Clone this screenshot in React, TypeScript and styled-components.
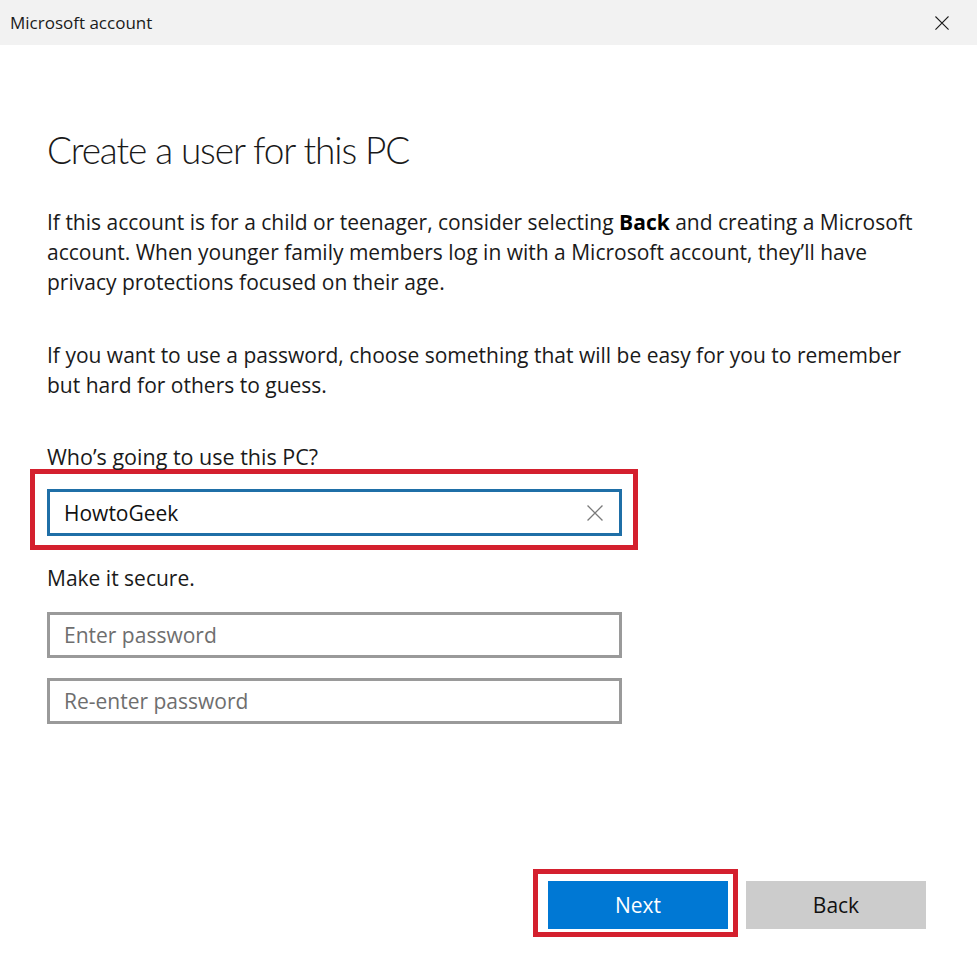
import React from "react";
import styled, {createGlobalStyle} from "styled-components";

const GlobalStyle = createGlobalStyle`
    html, body {
        margin: 0;
        padding: 0;
        background: #ffffff;
    }
    body {
        font-family: "Open Sans", "Noto Sans", "Liberation Sans", sans-serif;
        color: #000;
    }
`;

const CloseGlyph: React.FC<{size: number, color: string, stroke: number}> = ({size, color, stroke}) => (
    <svg width={size} height={size} viewBox="0 0 16 16" fill="none">
        <path d="M1 1L15 15M15 1L1 15" stroke={color} strokeWidth={stroke} strokeLinecap="square"/>
    </svg>
);

interface FieldProps {
    value?: string,
    placeholder?: string,
    focused?: boolean,
    clearable?: boolean
}

const Field: React.FC<FieldProps> = ({value, placeholder, focused = false, clearable = false}) => (
    <FieldBox focused={focused}>
        {value ? <FieldValue>{value}</FieldValue> : <FieldPlaceholder>{placeholder}</FieldPlaceholder>}
        {clearable && <ClearButton><CloseGlyph size={16} color="#7a7a7a" stroke={1.3}/></ClearButton>}
    </FieldBox>
);

export default function App() {
    return (
        <>
            <GlobalStyle/>
            <Window>
                <TitleBar>
                    <TitleText>Microsoft account</TitleText>
                    <TitleClose><CloseGlyph size={14} color="#1a1a1a" stroke={1.3}/></TitleClose>
                </TitleBar>
                <Content>
                    <Heading>Create a user for this PC</Heading>
                    <Paragraph>
                        If this account is for a child or teenager, consider selecting <b>Back</b> and creating a Microsoft<br/>
                        account. When younger family members log in with a Microsoft account, they’ll have<br/>
                        privacy protections focused on their age.
                    </Paragraph>
                    <Paragraph spaced>
                        If you want to use a password, choose something that will be easy for you to remember<br/>
                        but hard for others to guess.
                    </Paragraph>
                    <Label>Who’s going to use this PC?</Label>
                    <FieldHighlight>
                        <Field value="HowtoGeek" focused clearable/>
                    </FieldHighlight>
                    <Label secure>Make it secure.</Label>
                    <FieldStack>
                        <Field placeholder="Enter password"/>
                        <Field placeholder="Re-enter password"/>
                    </FieldStack>
                </Content>
                <ButtonRow>
                    <ButtonHighlight>
                        <ActionButton primary>Next</ActionButton>
                    </ButtonHighlight>
                    <ActionButton>Back</ActionButton>
                </ButtonRow>
            </Window>
        </>
    );
}

const Window = styled.div`
    width: 977px;
    height: 972px;
    display: flex;
    flex-direction: column;
    background: #fff;
    overflow: hidden;
`;

const TitleBar = styled.div`
    height: 45px;
    background: #f2f2f2;
    display: flex;
    align-items: center;
    justify-content: space-between;
    padding: 0 28px 0 10px;
    flex-shrink: 0;
`;

const TitleText = styled.span`
    font-size: 17px;
    color: #1a1a1a;
`;

const TitleClose = styled.span`
    display: flex;
`;

const Content = styled.div`
    padding: 0 47px;
    flex: 1;
`;

const Heading = styled.h1`
    margin: 81px 0 0;
    font-family: Lato, "Open Sans", sans-serif;
    font-size: 37px;
    line-height: 48px;
    font-weight: 300;
    letter-spacing: -1.1px;
    color: #1a1a1a;
`;

const Paragraph = styled.p<{ spaced?: boolean }>`
    margin: ${props => props.spaced ? "43px" : "33px"} 0 0;
    font-size: 21px;
    line-height: 30px;
    color: #1a1a1a;
    white-space: nowrap;
    b {
        font-weight: 700;
        color: #000;
    }
`;

const Label = styled.div<{ secure?: boolean }>`
    margin-top: ${props => props.secure ? "27px" : "42px"};
    margin-bottom: ${props => props.secure ? "19px" : "17px"};
    font-size: ${props => props.secure ? "21px" : "21.5px"};
    line-height: 30px;
    color: #1a1a1a;
`;

const FieldHighlight = styled.div`
    width: 576px;
    border: 5px solid #d4202e;
    padding: 15px 10px 9px 12px;
    margin: -20px 0 -14px -17px;
`;

const FieldBox = styled.div<{ focused: boolean }>`
    box-sizing: border-box;
    width: 575px;
    height: ${props => props.focused ? "47px" : "46px"};
    border: 3px solid ${props => props.focused ? "#1f6fa7" : "#9a9a9a"};
    display: flex;
    align-items: center;
    padding: 0 16px 0 14px;
    background: #fff;
`;

const FieldValue = styled.span`
    flex: 1;
    font-size: 21px;
    color: #111;
`;

const FieldPlaceholder = styled.span`
    flex: 1;
    font-size: 21px;
    color: #6e6e6e;
`;

const ClearButton = styled.span`
    display: flex;
`;

const FieldStack = styled.div`
    display: flex;
    flex-direction: column;
    gap: 20px;
`;

const ButtonRow = styled.div`
    display: flex;
    justify-content: flex-end;
    align-items: flex-start;
    gap: 8px;
    padding: 0 51px 43px 0;
`;

const ButtonHighlight = styled.div`
    border: 5px solid #d4202e;
    padding: 7px 5px 3px 10px;
    margin: -12px 0 -8px;
`;

const ActionButton = styled.div<{ primary?: boolean }>`
    width: 180px;
    height: 48px;
    display: flex;
    align-items: center;
    justify-content: center;
    font-size: 21px;
    background: ${props => props.primary ? "#0078d4" : "#cccccc"};
    color: ${props => props.primary ? "#fff" : "#111"};
`;
